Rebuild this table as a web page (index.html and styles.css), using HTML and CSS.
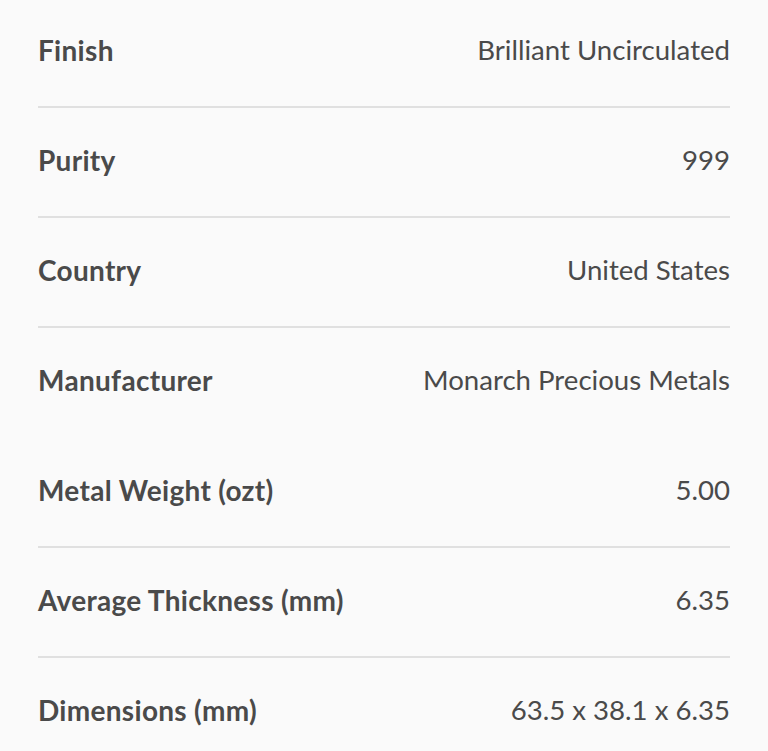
FILE: index.html
```html
<!DOCTYPE html>
<html lang="en">
<head>
<meta charset="utf-8">
<title>Specifications</title>
<link rel="stylesheet" href="styles.css">
</head>
<body>
<div class="specs">
  <div class="row"><span class="label">Finish</span><span class="value">Brilliant Uncirculated</span></div>
  <div class="row"><span class="label">Purity</span><span class="value">999</span></div>
  <div class="row"><span class="label">Country</span><span class="value">United States</span></div>
  <div class="row no-line"><span class="label">Manufacturer</span><span class="value">Monarch Precious Metals</span></div>
  <div class="row"><span class="label">Metal Weight (ozt)</span><span class="value">5.00</span></div>
  <div class="row"><span class="label">Average Thickness (mm)</span><span class="value">6.35</span></div>
  <div class="row"><span class="label">Dimensions (mm)</span><span class="value">63.5 x 38.1 x 6.35</span></div>
</div>
</body>
</html>
```
FILE: styles.css
```css
html, body {
  margin: 0;
  padding: 0;
  background: #fafafa;
}
body {
  font-family: Lato, "Open Sans", sans-serif;
  color: #4a4a4a;
  overflow: hidden;
}
.specs {
  padding: 0 38px;
}
.row {
  display: flex;
  justify-content: space-between;
  align-items: center;
  padding: 38px 0 42px;
  line-height: 28px;
  font-size: 28px;
  border-bottom: 2px solid #e0e0e0;
}
.row:first-child {
  padding-top: 36px;
}
.row.no-line {
  border-bottom-color: transparent;
}
.label {
  font-weight: 700;
  letter-spacing: 0.3px;
}
.value {
  font-weight: 400;
  font-size: 27.6px;
}
```
